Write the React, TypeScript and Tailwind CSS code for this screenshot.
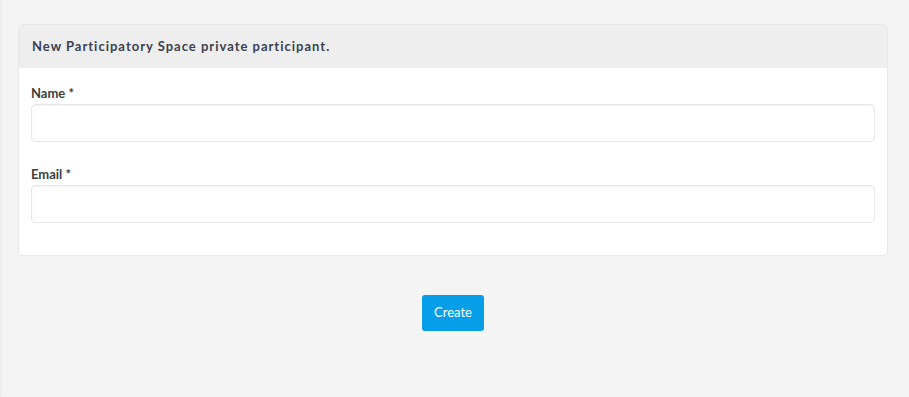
import React from "react";

const font = { fontFamily: "Lato, 'Noto Sans', sans-serif" };

function Field({ label }: { label: string }) {
  return (
    <label className="block">
      <span className="block text-[13px] font-bold leading-4 text-[#3d3d3d]">
        {label} *
      </span>
      <input
        type="text"
        className="mt-[3px] block h-[38px] w-full rounded-[4px] border border-[#e8e8e8] bg-white px-3 text-sm shadow-[inset_0_1px_2px_rgba(0,0,0,0.06)] outline-none"
      />
    </label>
  );
}

export default function App() {
  return (
    <div
      className="min-h-[397px] w-full bg-[#f4f4f4] pl-[18px] pr-[21px] pt-[24px] shadow-[inset_3px_0_3px_-2px_rgba(0,0,0,0.06)]"
      style={font}
    >
      {/* Card */}
      <div className="overflow-hidden rounded-[4px] border border-[#e8e8e8] bg-white">
        <div className="flex h-[43px] items-center bg-[#eeeeee] px-[13px]">
          <h2 className="text-[13px] font-bold tracking-[1px] text-[#3b4150]">
            New Participatory Space private participant.
          </h2>
        </div>
        <div className="flex flex-col gap-[24px] px-[12px] pb-[32px] pt-[17px]">
          <Field label="Name" />
          <Field label="Email" />
        </div>
      </div>

      {/* Actions */}
      <div className="flex justify-center pt-[39px]">
        <button className="h-[36px] rounded-[3px] bg-[#069ee8] px-[12px] text-[13px] text-white">
          Create
        </button>
      </div>
    </div>
  );
}
